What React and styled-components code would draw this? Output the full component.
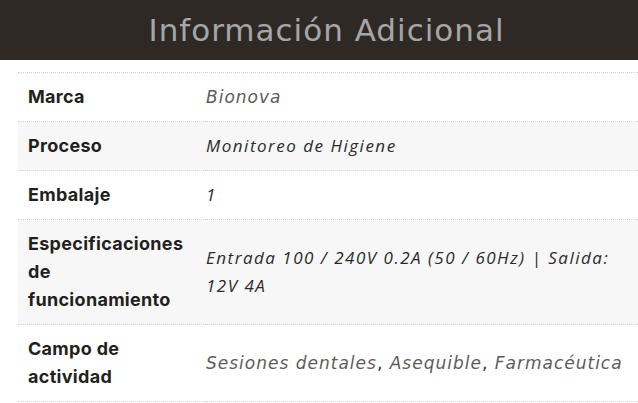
import React from "react";
import styled, { createGlobalStyle } from "styled-components";

const GlobalStyle = createGlobalStyle`
  html, body {
    margin: 0;
    padding: 0;
    background: #fff;
  }
  body {
    font-family: "Open Sans", "Liberation Sans", sans-serif;
  }
`;

const Page = styled.div`
  width: 638px;
  height: 403px;
  overflow: hidden;
  background: #fff;
`;

const Banner = styled.h2`
  margin: 0;
  height: 60px;
  padding-left: 15px;
  display: flex;
  align-items: center;
  justify-content: center;
  background: #2f2925;
  color: #a6a6a6;
  font-family: "DejaVu Sans", "Open Sans", sans-serif;
  font-weight: 400;
  font-size: 31px;
  letter-spacing: 1px;
`;

const Table = styled.table`
  margin: 12px 0 0 18px;
  width: 620px;
  table-layout: fixed;
  border-collapse: collapse;
  border-top: 1px dotted #d4d4d4;
`;

const Row = styled.tr`
  background: ${({ $shaded }) => ($shaded ? "#f7f7f7" : "#fff")};
  border-bottom: 1px dotted #d4d4d4;
`;

const Label = styled.th`
  box-sizing: border-box;
  width: 188px;
  padding: 10px 10px;
  text-align: left;
  vertical-align: middle;
  font-family: "Inter", "Liberation Sans", sans-serif;
  font-weight: 700;
  font-size: 18px;
  letter-spacing: 0.3px;
  line-height: 28px;
  color: #231f1c;
`;

const Value = styled.td`
  padding: 10px 10px 10px 0;
  vertical-align: middle;
  font-size: 17px;
  line-height: 28px;
  font-style: italic;
  color: ${({ $muted }) => ($muted ? "#5c5c5c" : "#2b2b2b")};
  font-family: ${({ $wide }) =>
    $wide ? '"DejaVu Sans", "Open Sans", sans-serif' : '"Open Sans", "Liberation Sans", sans-serif'};
  letter-spacing: ${({ $wide }) => ($wide ? "1px" : "1.5px")};
`;

const Sep = styled.span`
  font-style: normal;
  color: #2b2b2b;
`;

const rows = [
  { label: "Marca", value: "Bionova", muted: true, wide: true },
  { label: "Proceso", value: "Monitoreo de Higiene" },
  { label: "Embalaje", value: "1" },
  {
    label: "Especificaciones de funcionamiento",
    value: "Entrada 100 / 240V 0.2A (50 / 60Hz) | Salida: 12V 4A",
  },
  {
    label: "Campo de actividad",
    tags: ["Sesiones dentales", "Asequible", "Farmacéutica"],
    muted: true,
    wide: true,
  },
];

export default function App() {
  return (
    <Page>
      <GlobalStyle />
      <Banner>Información Adicional</Banner>
      <Table>
        <tbody>
          {rows.map((r, i) => (
            <Row key={r.label} $shaded={i % 2 === 1}>
              <Label>{r.label}</Label>
              <Value $muted={r.muted} $wide={r.wide}>
                {r.tags
                  ? r.tags.map((t, j) => (
                      <React.Fragment key={t}>
                        {t}
                        {j < r.tags.length - 1 && <Sep>, </Sep>}
                      </React.Fragment>
                    ))
                  : r.value}
              </Value>
            </Row>
          ))}
        </tbody>
      </Table>
    </Page>
  );
}
